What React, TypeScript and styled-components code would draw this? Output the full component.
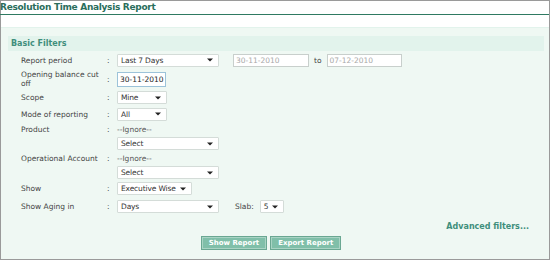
import React from "react";
import styled, { createGlobalStyle } from "styled-components";

const Global = createGlobalStyle`
  html, body { margin: 0; padding: 0; background: #fff; }
  body { font-family: "DejaVu Sans", Verdana, sans-serif; }
`;

const Frame = styled.div`
  width: 548px;
  height: 258px;
  border: 1px solid #9a9a9a;
  border-right-width: 2px;
  display: flex;
  flex-direction: column;
  background: #fff;
`;

const Title = styled.div`
  height: 13px;
  border-bottom: 1px solid #2f7a62;
  font-size: 9px;
  font-weight: bold;
  color: #2b6e5c;
  line-height: 13px;
  letter-spacing: -0.3px;
  margin-left: -1px;
`;

const Gap = styled.div`
  height: 12px;
`;

const Panel = styled.div`
  flex: 1;
  background: #eff8f3;
  border-top: 1px solid #e2f3ec;
  padding: 8px 5px 0 7px;
  display: flex;
  flex-direction: column;
`;

const Band = styled.div`
  height: 15px;
  background: #e2f3ec;
  font-size: 8px;
  font-weight: bold;
  color: #3f8f7c;
  line-height: 15px;
  padding-left: 3px;
`;

const Rows = styled.div`
  padding-left: 13px;
  display: flex;
  flex-direction: column;
`;

const Row = styled.div<{ $h: number }>`
  display: flex;
  align-items: center;
  height: ${(p) => p.$h}px;
  font-size: 7.5px;
  color: #444;
`;

const Label = styled.div`
  width: 86px;
  line-height: 9px;
`;

const Colon = styled.div`
  width: 10px;
`;

const FakeSelect = styled.div<{ $w: number }>`
  width: ${(p) => p.$w}px;
  height: 13px;
  box-sizing: border-box;
  background: #fff;
  border: 1px solid #d4dcd8;
  border-radius: 1px;
  display: flex;
  align-items: center;
  justify-content: space-between;
  padding: 0 5px 0 3px;
  font-size: 7.5px;
  color: #333;
  white-space: nowrap;
`;

const SelectText = styled.span`
  letter-spacing: -0.15px;
`;

const Input = styled.div<{ $w: number; $disabled?: boolean; $blue?: boolean }>`
  width: ${(p) => p.$w}px;
  height: ${(p) => (p.$blue ? 15 : 13)}px;
  box-sizing: border-box;
  background: #fff;
  border: 1px solid ${(p) => (p.$blue ? "#9cc3d9" : "#c8cfcc")};
  display: flex;
  align-items: center;
  padding-left: 2px;
  font-size: 7.5px;
  color: ${(p) => (p.$disabled ? "#a8a8a8" : "#222")};
`;

const Spacer = styled.div<{ $w: number }>`
  width: ${(p) => p.$w}px;
  flex: none;
`;

const Muted = styled.span`
  color: #555;
`;

const Indented = styled.div`
  padding-left: 96px;
`;

const AdvRow = styled.div`
  display: flex;
  justify-content: flex-end;
  padding-right: 15px;
  margin-top: 3px;
  font-size: 8px;
  font-weight: bold;
  color: #3f8f7c;
  height: 14px;
  align-items: center;
`;

const ButtonBar = styled.div`
  display: flex;
  justify-content: center;
  gap: 5px;
  margin-top: 4px;
  padding-right: 10px;
`;

const Btn = styled.button`
  height: 12px;
  box-sizing: border-box;
  padding: 0 6px;
  background: #80bfa9;
  border: 1px solid #a9d4c4;
  outline: 1px solid #6aa792;
  color: #fff;
  font-family: inherit;
  font-weight: bold;
  font-size: 7px;
  line-height: 10px;
  cursor: pointer;
`;

const Arrow = () => (
  <svg width="6" height="4" viewBox="0 0 6 4">
    <path d="M0 0.5 L6 0.5 L3 3.5 Z" fill="#222" />
  </svg>
);

const Select = ({ w, children }: { w: number; children: React.ReactNode }) => (
  <FakeSelect $w={w}>
    <SelectText>{children}</SelectText>
    <Arrow />
  </FakeSelect>
);

export default function App() {
  return (
    <>
      <Global />
      <Frame>
        <Title>Resolution Time Analysis Report</Title>
        <Gap />
        <Panel>
          <Band>Basic Filters</Band>
          <Rows>
            <Row $h={18}>
              <Label>Report period</Label>
              <Colon>:</Colon>
              <Select w={102}>Last 7 Days</Select>
              <Spacer $w={14} />
              <Input $w={76} $disabled>30-11-2010</Input>
              <Spacer $w={5} />
              <span>to</span>
              <Spacer $w={5} />
              <Input $w={75} $disabled>07-12-2010</Input>
            </Row>
            <Row $h={20}>
              <Label>Opening balance cut off</Label>
              <Colon>:</Colon>
              <Input $w={49} $blue>30-11-2010</Input>
            </Row>
            <Row $h={17}>
              <Label>Scope</Label>
              <Colon>:</Colon>
              <Select w={50}>Mine</Select>
            </Row>
            <Row $h={16}>
              <Label>Mode of reporting</Label>
              <Colon>:</Colon>
              <Select w={50}>All</Select>
            </Row>
            <Row $h={14}>
              <Label>Product</Label>
              <Colon>:</Colon>
              <Muted>--Ignore--</Muted>
            </Row>
            <Row $h={15}>
              <Indented>
                <Select w={102}>Select</Select>
              </Indented>
            </Row>
            <Row $h={14}>
              <Label>Operational Account</Label>
              <Colon>:</Colon>
              <Muted>--Ignore--</Muted>
            </Row>
            <Row $h={15}>
              <Indented>
                <Select w={102}>Select</Select>
              </Indented>
            </Row>
            <Row $h={17}>
              <Label>Show</Label>
              <Colon>:</Colon>
              <Select w={75}>Executive Wise</Select>
            </Row>
            <Row $h={19}>
              <Label>Show Aging in</Label>
              <Colon>:</Colon>
              <Select w={102}>Days</Select>
              <Spacer $w={16} />
              <span>Slab:</span>
              <Spacer $w={6} />
              <Select w={24}>5</Select>
            </Row>
          </Rows>
          <AdvRow>Advanced filters...</AdvRow>
          <ButtonBar>
            <Btn>Show Report</Btn>
            <Btn>Export Report</Btn>
          </ButtonBar>
        </Panel>
      </Frame>
    </>
  );
}
